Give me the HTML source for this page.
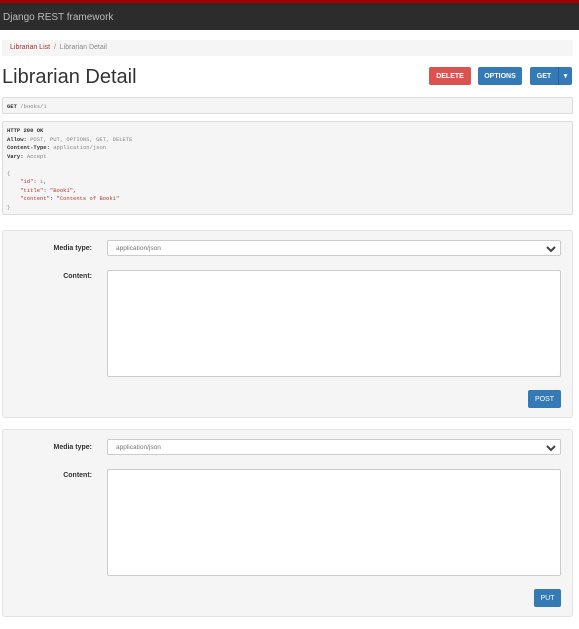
<!DOCTYPE html>
<html><head><style>
*{box-sizing:border-box;margin:0;padding:0}
body{width:579px;height:629px;background:#fff;font-family:"Liberation Sans",sans-serif;position:relative;overflow:hidden}
.a{position:absolute}
.nav{left:0;top:0;width:579px;height:30px;background:#2c2c2c;border-top:3px solid #a30000}
.nav span{position:absolute;left:3px;top:9px;font-size:10px;color:#bbb}
.bc{left:2px;top:40px;width:571px;height:16px;background:#f5f5f5;font-size:7px;color:#888;padding:4px 8px}
.bc b{font-weight:normal;color:#a3302e}
h1{position:absolute;left:2px;top:66px;font-size:20px;font-weight:normal;color:#333}
.btn{position:absolute;height:18px;border-radius:2px;color:#fff;font-size:7px;font-weight:bold;display:flex;align-items:center;justify-content:center}
.pre{left:2px;width:571px;background:#f5f5f5;border:1px solid #ddd;border-radius:2px;font-family:"Liberation Mono",monospace;font-size:5.5px;color:#333;padding:5px 4px;line-height:8.5px;white-space:pre}
.g{color:#888}.r{color:#c0392b}
.well{left:2px;width:571px;height:188px;background:#f5f5f5;border:1px solid #e3e3e3;border-radius:3px}
.lbl{position:absolute;font-size:7px;font-weight:bold;color:#333;text-align:right;width:60px;left:32px}
.sel{position:absolute;left:107px;width:454px;height:16px;background:#fff;border:1px solid #ccc;border-radius:2px;font-size:6.5px;color:#777;padding:4px 8px}
.sel svg{position:absolute;right:4px;top:4px}
.ta{position:absolute;left:107px;width:454px;height:107px;background:#fff;border:1px solid #ccc;border-radius:2px}
</style></head><body>
<div class="a nav"><span>Django REST framework</span></div>
<div class="a bc"><b>Librarian List</b> &nbsp;/&nbsp; Librarian Detail</div>
<h1>Librarian Detail</h1>
<div class="btn" style="left:429px;top:67px;width:42px;background:#d9534f">DELETE</div>
<div class="btn" style="left:478px;top:67px;width:44px;background:#337ab7">OPTIONS</div>
<div class="btn" style="left:530px;top:67px;width:28px;background:#337ab7;border-radius:2px 0 0 2px">GET</div>
<div class="btn" style="left:558px;top:67px;width:14px;background:#337ab7;border-left:1px solid #2a6496;border-radius:0 2px 2px 0">▾</div>
<div class="a pre" style="top:97px;height:17px"><b>GET</b> <span class="g">/books/1</span></div>
<div class="a pre" style="top:121px;height:94px"><b>HTTP 200 OK</b>
<b>Allow:</b> <span class="g">POST, PUT, OPTIONS, GET, DELETE</span>
<b>Content-Type:</b> <span class="g">application/json</span>
<b>Vary:</b> <span class="g">Accept</span>

<span class="g">{</span>
    <span class="r">"id"</span>: <span class="g">1</span>,
    <span class="r">"title"</span>: <span class="r">"Book1"</span>,
    <span class="r">"content"</span>: <span class="r">"Contents of Book1"</span>
<span class="g">}</span></div>

<div class="a well" style="top:230px"></div>
<div class="lbl" style="top:245px">Media type:</div>
<div class="sel" style="top:240px">application/json<svg width="10" height="8" viewBox="0 0 10 8"><path d="M1 2l4 4 4-4" stroke="#444" stroke-width="2" fill="none"/></svg></div>
<div class="lbl" style="top:273px">Content:</div>
<div class="ta" style="top:270px"></div>
<div class="btn" style="left:528px;top:390px;width:33px;background:#337ab7;font-weight:normal">POST</div>

<div class="a well" style="top:429px"></div>
<div class="lbl" style="top:444px">Media type:</div>
<div class="sel" style="top:439px">application/json<svg width="10" height="8" viewBox="0 0 10 8"><path d="M1 2l4 4 4-4" stroke="#444" stroke-width="2" fill="none"/></svg></div>
<div class="lbl" style="top:472px">Content:</div>
<div class="ta" style="top:469px"></div>
<div class="btn" style="left:534px;top:589px;width:27px;background:#337ab7;font-weight:normal">PUT</div>
</body></html>
